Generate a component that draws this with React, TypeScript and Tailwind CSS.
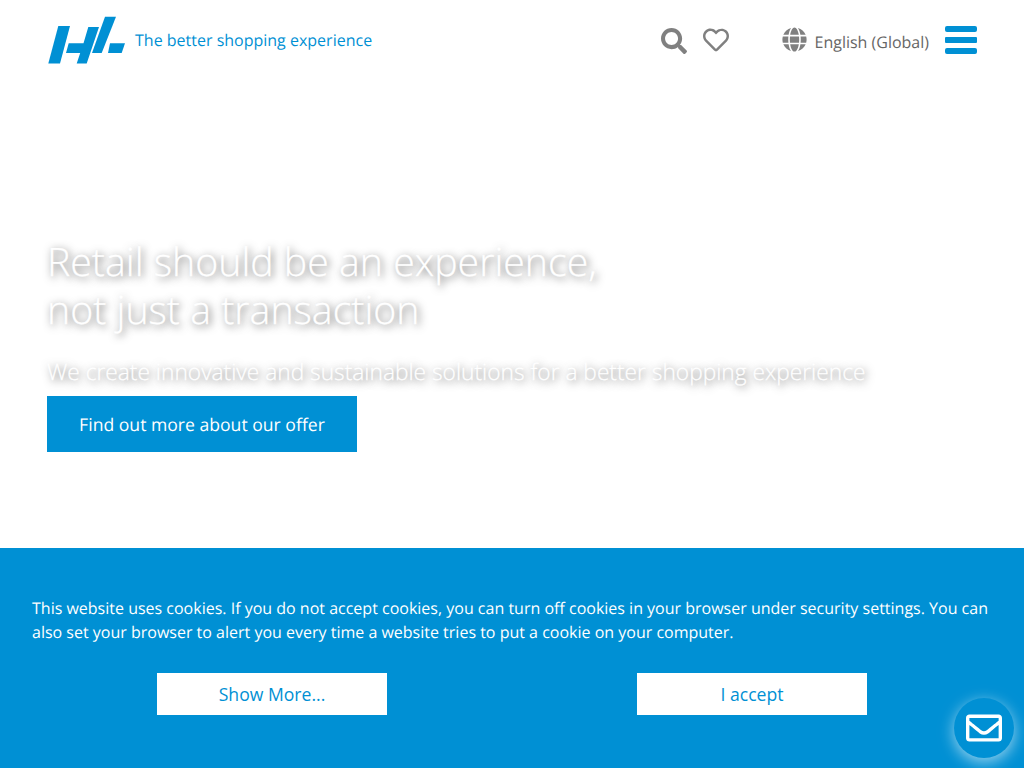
import React from "react";
import { FaSearch, FaRegHeart, FaGlobe, FaRegEnvelope } from "react-icons/fa";

function Logo() {
  return (
    <svg width="78" height="48" viewBox="0 0 78 48" className="block shrink-0">
      <g fill="#0090d4">
        <path d="M10.300 10H22L12 47.500H0.300Z" />
        <path d="M40.300 11H51L38.700 47.500H28.700L32.200 37H18L20.700 27.300H35.500Z" />
        <path d="M57 0.700H68L53.700 37H44Z" />
        <path d="M62 27.300H77L73.700 37H60Z" />
      </g>
    </svg>
  );
}

export default function App() {
  return (
    <div className="relative h-[768px] w-full overflow-hidden bg-white font-['Open_Sans',sans-serif] [text-rendering:geometricPrecision]">
      <header className="flex h-[80px] items-start pl-[48px] pr-[47px]">
        <div className="mt-[16px] flex items-center">
          <Logo />
          <span className="ml-[9px] text-[16px] leading-[24px] text-[#0090d4]">The better shopping experience</span>
        </div>
        <div className="ml-auto flex items-start">
          <FaSearch className="mt-[28px] text-[26px] text-[#808080]" />
          <FaRegHeart className="ml-[16px] mt-[27px] text-[26px] text-[#808080]" />
          <FaGlobe className="ml-[53px] mt-[27px] text-[25px] text-[#808080]" />
          <span className="ml-[7px] mt-[30px] text-[16px] leading-[24px] text-[#666666]">English (Global)</span>
          <div className="ml-[16px] mt-[26px] flex h-[28px] w-[32px] flex-col justify-between">
            <div className="h-[6px] rounded-[2px] bg-[#0090d4]" />
            <div className="h-[6px] rounded-[1px] bg-[#0090d4]" />
            <div className="h-[6px] rounded-[2px] bg-[#0090d4]" />
          </div>
        </div>
      </header>

      <main className="h-[468px] pl-[47px] pt-[158px]">
        <h1 className="text-[39.2px] font-light leading-[48px] tracking-[0.03px] text-white [-webkit-text-stroke:0.25px_white] [text-shadow:2px_2px_8px_rgba(0,0,0,0.7)]">
          Retail should be an experience,
          <br />
          not just a transaction
        </h1>
        <p className="mt-[18px] text-[22.7px] font-light leading-[40px] tracking-[0.02px] text-white [-webkit-text-stroke:0.25px_white] [text-shadow:2px_2px_8px_rgba(0,0,0,0.7)]">
          We create innovative and sustainable solutions for a better shopping experience
        </p>
        <a className="mt-[4px] flex h-[56px] w-[310px] items-center justify-center bg-[#0090d4] pt-[2px] text-[17.6px] text-white">
          Find out more about our offer
        </a>
      </main>

      <section className="h-[220px] bg-[#0090d4] px-[32px] pt-[48px] text-white">
        <p className="text-[16px] leading-[24px]">
          This website uses cookies. If you do not accept cookies, you can turn off cookies in your browser under security settings. You can also set your browser to alert you every time a website tries to put a cookie on your computer.
        </p>
        <div className="mt-[29px] flex">
          <div className="flex w-1/2 justify-center">
            <button className="h-[42px] w-[230px] bg-white text-[17.6px] text-[#0090d4]">Show More...</button>
          </div>
          <div className="flex w-1/2 justify-center">
            <button className="h-[42px] w-[230px] bg-white text-[17.6px] text-[#0090d4]">I accept</button>
          </div>
        </div>
      </section>

      <div className="absolute left-[954px] top-[698px] flex h-[60px] w-[60px] items-center justify-center rounded-full bg-[#0090d4] shadow-[0_4px_15px_rgba(255,255,255,0.6)]">
        <FaRegEnvelope className="text-[36px] text-white" />
      </div>
    </div>
  );
}
